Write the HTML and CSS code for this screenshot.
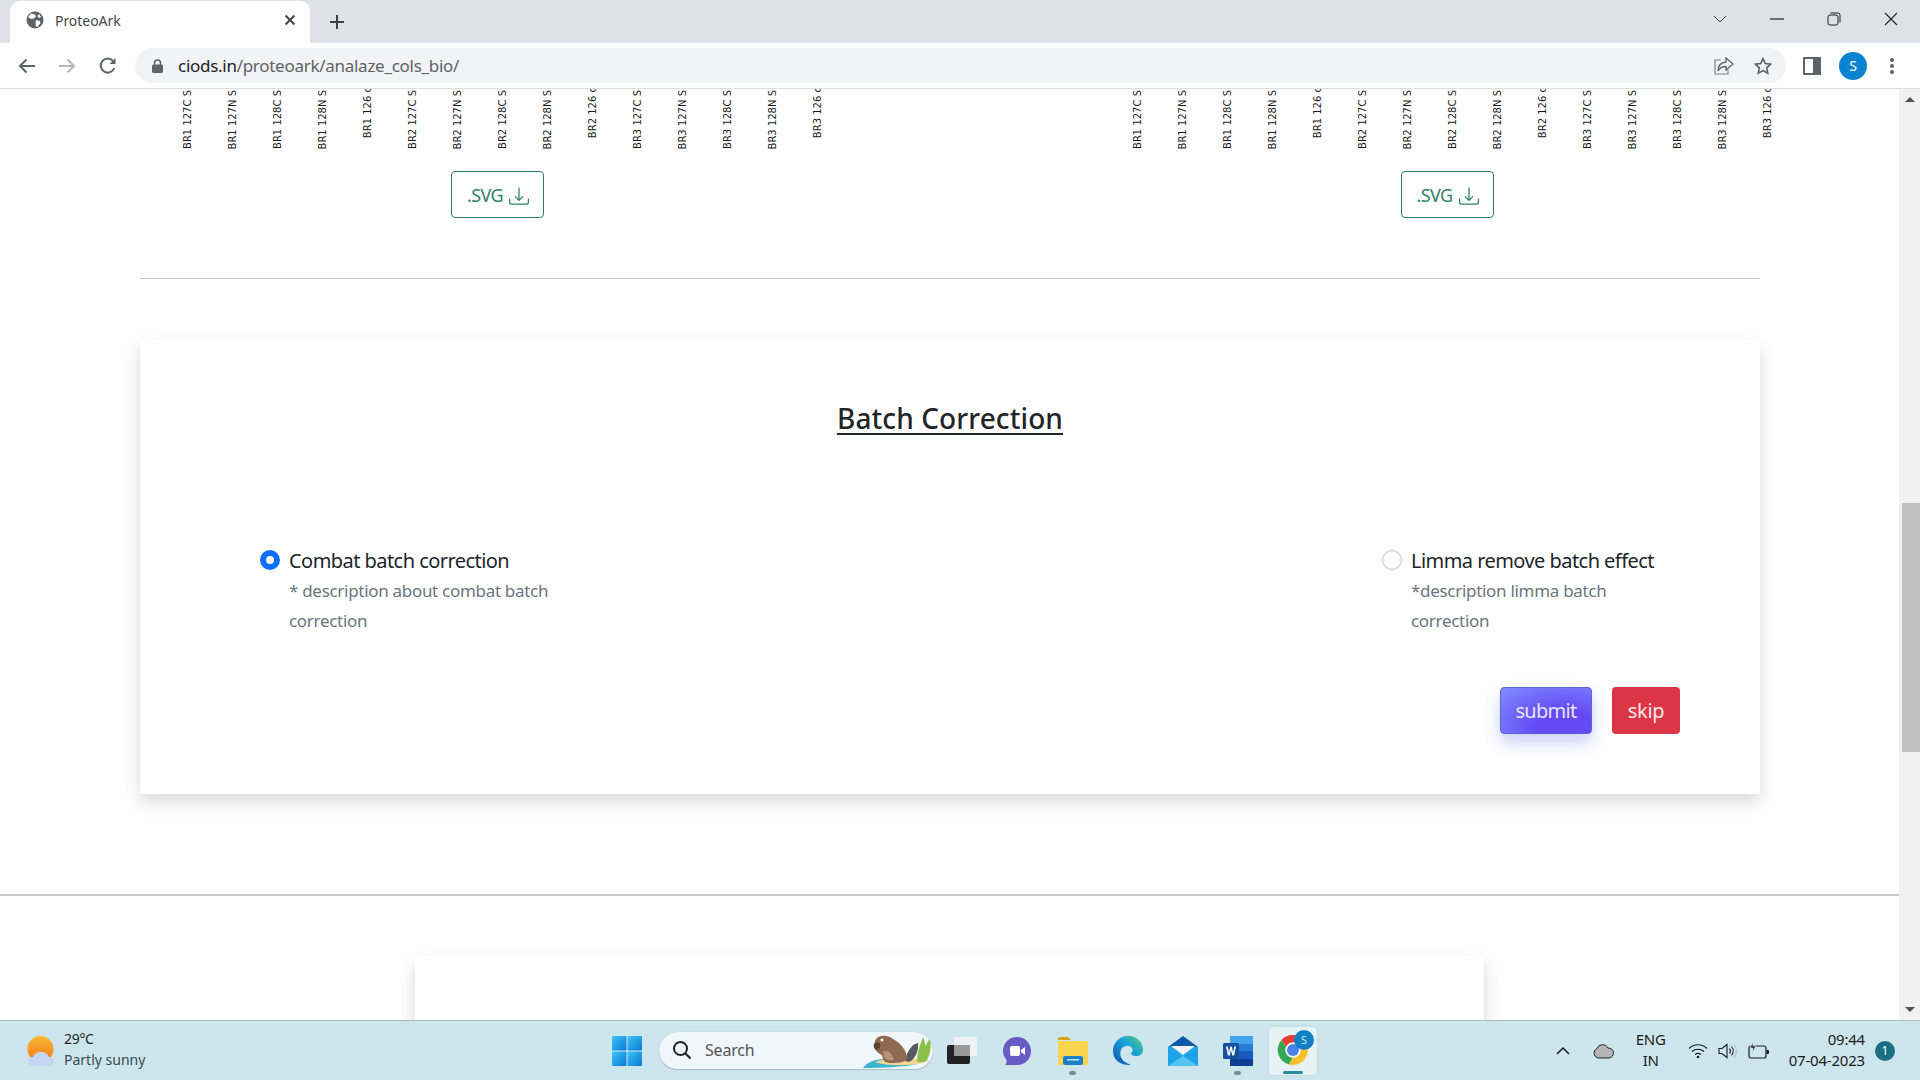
FILE: index.html
```html
<!DOCTYPE html>
<html lang="en">
<head>
<meta charset="utf-8">
<title>ProteoArk</title>
<link rel="stylesheet" href="styles.css">
</head>
<body>
<div class="screen">
  <header class="tabstrip">
    <div class="tab">
      <svg class="favicon" width="18" height="18" viewBox="0 0 18 18"><circle cx="9" cy="9" r="8.5" fill="#5f6368"/><path d="M5 2.5l4 1 1 2-2 2-3 .5-3-2zM10 9l4 1 .5 2-3 4-1.500-.5-.5-3zM13 3l2 3-2 1-1.500-2z" fill="#fff"/></svg>
      <span class="tab-title">ProteoArk</span>
      <svg class="tab-close" width="12" height="12" viewBox="0 0 12 12"><path d="M1.500 1.500l9 9M10.500 1.500l-9 9" stroke="#3c4043" stroke-width="1.800"/></svg>
    </div>
    <svg class="new-tab" width="16" height="16" viewBox="0 0 16 16"><path d="M8 1v14M1 8h14" stroke="#3c4043" stroke-width="2"/></svg>
    <div class="win-controls">
      <svg width="14" height="8" viewBox="0 0 14 8"><path d="M1 1l6 6 6-6" fill="none" stroke="#3c4043"/></svg>
      <svg width="14" height="2" viewBox="0 0 14 2"><path d="M0 1h14" stroke="#222" stroke-width="1.200"/></svg>
      <svg width="14" height="14" viewBox="0 0 14 14"><rect x="1" y="3" width="10" height="10" rx="2" fill="none" stroke="#222"/><path d="M3.500 1H11a2 2 0 0 1 2 2v7.500" fill="none" stroke="#222"/></svg>
      <svg width="14" height="14" viewBox="0 0 14 14"><path d="M1 1l12 12M13 1L1 13" stroke="#222" stroke-width="1.100"/></svg>
    </div>
  </header>

  <nav class="toolbar">
    <svg class="nav-back" width="18" height="16" viewBox="0 0 18 16"><path d="M17 8H2M8.500 1.500L2 8l6.500 6.500" fill="none" stroke="#5f6368" stroke-width="2"/></svg>
    <svg class="nav-fwd" width="18" height="16" viewBox="0 0 18 16"><path d="M1 8h15M9.500 1.500L16 8l-6.500 6.500" fill="none" stroke="#b4b7bb" stroke-width="2"/></svg>
    <svg class="nav-reload" width="18" height="18" viewBox="0 0 18 18"><path d="M15.300 11a7 7 0 1 1-1.300-7" fill="none" stroke="#5f6368" stroke-width="2"/><path d="M16.500 1v6h-6z" fill="#5f6368"/></svg>
    <div class="omnibox">
      <svg class="lock" width="11" height="14" viewBox="0 0 11 14"><path d="M2.500 6V4a3 3 0 0 1 6 0v2" fill="none" stroke="#5f6368" stroke-width="1.500"/><rect y="5.500" width="11" height="8.500" rx="1.500" fill="#5f6368"/></svg>
      <span class="url"><span class="url-host">ciods.in</span>/proteoark/analaze_cols_bio/</span>
      <svg class="omni-share" width="20" height="18" viewBox="0 0 20 18"><path d="M7 3H1v14h13v-4" fill="none" stroke="#7d8085" stroke-width="1.200"/><path d="M12 1l7 6-7 6V9.500C8 9.500 5.500 11 4 14c0-5 3-8.500 8-9z" fill="none" stroke="#5f6368" stroke-width="1.300"/></svg>
      <svg class="omni-star" width="18" height="18" viewBox="0 0 20 20"><path d="M10 1.800l2.500 5.500 6 .7-4.400 4.100 1.200 5.900L10 15.100l-5.300 2.900 1.200-5.900L1.500 8l6-.7z" fill="none" stroke="#5f6368" stroke-width="1.800"/></svg>
    </div>
    <div class="panel-icon"><span class="panel-slot"></span></div>
    <div class="avatar">S</div>
    <svg class="kebab" width="6" height="18" viewBox="0 0 6 18"><circle cx="3" cy="3" r="2" fill="#5f6368"/><circle cx="3" cy="9" r="2" fill="#5f6368"/><circle cx="3" cy="15" r="2" fill="#5f6368"/></svg>
  </nav>

  <div class="viewport">
    <main class="page">
      <section class="charts">
        <div class="chart">
          <div class="ticks">
            <span class="tick">BR1 127C S</span><span class="tick">BR1 127N S</span><span class="tick">BR1 128C S</span><span class="tick">BR1 128N S</span><span class="tick tick-short">BR1 126 c</span>
            <span class="tick">BR2 127C S</span><span class="tick">BR2 127N S</span><span class="tick">BR2 128C S</span><span class="tick">BR2 128N S</span><span class="tick tick-short">BR2 126 c</span>
            <span class="tick">BR3 127C S</span><span class="tick">BR3 127N S</span><span class="tick">BR3 128C S</span><span class="tick">BR3 128N S</span><span class="tick tick-short">BR3 126 c</span>
          </div>
          <button class="btn-svg" type="button">.SVG
            <svg width="20" height="20" viewBox="0 0 16 16" fill="currentColor"><path d="M.5 9.900a.5.5 0 0 1 .5.5v2.500a1 1 0 0 0 1 1h12a1 1 0 0 0 1-1v-2.500a.5.5 0 0 1 1 0v2.500a2 2 0 0 1-2 2H2a2 2 0 0 1-2-2v-2.500a.5.5 0 0 1 .5-.5z"/><path d="M7.646 11.854a.5.5 0 0 0 .708 0l3-3a.5.5 0 0 0-.708-.708L8.500 10.293V1.500a.5.5 0 0 0-1 0v8.793L5.354 8.146a.5.5 0 1 0-.708.708l3 3z"/></svg>
          </button>
        </div>
        <div class="chart">
          <div class="ticks">
            <span class="tick">BR1 127C S</span><span class="tick">BR1 127N S</span><span class="tick">BR1 128C S</span><span class="tick">BR1 128N S</span><span class="tick tick-short">BR1 126 c</span>
            <span class="tick">BR2 127C S</span><span class="tick">BR2 127N S</span><span class="tick">BR2 128C S</span><span class="tick">BR2 128N S</span><span class="tick tick-short">BR2 126 c</span>
            <span class="tick">BR3 127C S</span><span class="tick">BR3 127N S</span><span class="tick">BR3 128C S</span><span class="tick">BR3 128N S</span><span class="tick tick-short">BR3 126 c</span>
          </div>
          <button class="btn-svg" type="button">.SVG
            <svg width="20" height="20" viewBox="0 0 16 16" fill="currentColor"><path d="M.5 9.900a.5.5 0 0 1 .5.5v2.500a1 1 0 0 0 1 1h12a1 1 0 0 0 1-1v-2.500a.5.5 0 0 1 1 0v2.500a2 2 0 0 1-2 2H2a2 2 0 0 1-2-2v-2.500a.5.5 0 0 1 .5-.5z"/><path d="M7.646 11.854a.5.5 0 0 0 .708 0l3-3a.5.5 0 0 0-.708-.708L8.500 10.293V1.500a.5.5 0 0 0-1 0v8.793L5.354 8.146a.5.5 0 1 0-.708.708l3 3z"/></svg>
          </button>
        </div>
      </section>

      <hr class="rule-inner">

      <section class="card">
        <h2 class="card-title">Batch Correction</h2>
        <div class="options">
          <div class="option">
            <label class="option-label"><input class="radio" type="radio" name="batch" checked>Combat batch correction</label>
            <p class="option-desc">* description about combat batch correction</p>
          </div>
          <div class="option">
            <label class="option-label"><input class="radio" type="radio" name="batch">Limma remove batch effect</label>
            <p class="option-desc">*description limma batch correction</p>
          </div>
        </div>
        <div class="actions">
          <button class="btn btn-submit" type="button">submit</button>
          <button class="btn btn-skip" type="button">skip</button>
        </div>
      </section>

      <hr class="rule-full">
      <section class="card-next"></section>
    </main>
    <aside class="scrollbar">
      <span class="arrow-up"></span>
      <span class="thumb"></span>
      <span class="arrow-down"></span>
    </aside>
  </div>

  <footer class="taskbar">
    <div class="tb-left">
      <svg width="28" height="30" viewBox="0 0 28 30"><defs><linearGradient id="sun" x1="0" y1="0" x2="0" y2="1"><stop offset="0" stop-color="#fbb830"/><stop offset="1" stop-color="#ee7a1e"/></linearGradient></defs><ellipse cx="13.500" cy="13" rx="13" ry="13" fill="url(#sun)"/><path d="M7 30c-4 0-6-2-6-4.500S3 21 6 21c1-3 4-5 8-5s7 2 8 5c3 0 5 2 5 4.500S25 30 21 30z" fill="#c3d6f3"/></svg>
      <div class="weather">
        <span class="weather-temp">29°C</span>
        <span class="weather-text">Partly sunny</span>
      </div>
    </div>
    <svg class="win-logo" width="30" height="30" viewBox="0 0 30 30"><defs><linearGradient id="winb" x1="0" y1="0" x2="1" y2="1"><stop offset="0" stop-color="#40c4f7"/><stop offset="1" stop-color="#0a78d4"/></linearGradient></defs><rect width="14.500" height="14.500" rx="1" fill="url(#winb)"/><rect x="15.500" width="14.500" height="14.500" rx="1" fill="url(#winb)"/><rect y="15.500" width="14.500" height="14.500" rx="1" fill="url(#winb)"/><rect x="15.500" y="15.500" width="14.500" height="14.500" rx="1" fill="url(#winb)"/></svg>
    <div class="search">
      <svg width="20" height="20" viewBox="0 0 20 20"><circle cx="8.500" cy="8.500" r="6.500" fill="none" stroke="#202020" stroke-width="2"/><path d="M13.500 13.500l5 5" stroke="#202020" stroke-width="2.200"/></svg>
      <span class="search-text">Search</span>
      <svg class="beaver" width="70" height="38" viewBox="0 0 70 38"><path d="M0 37C5 30 15 26 40 28l15 5C40 36 20 37 0 37z" fill="#3bb3d1"/><path d="M12 31c13-5 38-4 54-2-6 6-41 7-54 2z" fill="#f0d890"/><path d="M42 30c2-10 7-17 13-18 1 8-3 16-9 19z" fill="#56595e"/><path d="M54 31c0-11 4-19 6-25 2 4 2 7 2 9 2-3 4-6 5-8 2 9 0 19-5 24z" fill="#8cc04a"/><path d="M12 10c2-6 12-7 18-2 8 4 14 12 14 19 0 4-8 5-16 5s-8-4-9-8c-5-2-9-6-7-14z" fill="#8f6a50"/><path d="M20 20c5-1 9 2 11 9-4 1-8 0-10-3z" fill="#b89274"/><circle cx="19" cy="9" r="1.500" fill="#fff"/><path d="M11 13c2-2 5-2 6 0 1 3-1 6-3 6s-4-3-3-6z" fill="#5e4231"/></svg>
    </div>
    <div class="apps">
      <svg width="30" height="30" viewBox="0 0 30 30"><rect x="0" y="9" width="23" height="19" rx="2" fill="#222"/><rect x="7" y="1" width="23" height="19" rx="2" fill="#f3f3f3" opacity=".9"/><rect x="7" y="9" width="16" height="11" fill="#9a9a9a"/></svg>
      <svg width="30" height="30" viewBox="0 0 30 30"><path d="M15 1c8 0 14 6 14 14s-6 14-14 14H3c2-2 2-4 1-6-2-2-3-5-3-8C1 7 7 1 15 1z" fill="#6a5bc4"/><rect x="8" y="10" width="10" height="10" rx="2" fill="#fff"/><path d="M19 14l4-3v8l-4-3z" fill="#fff"/></svg>
      <div class="app-slot app-slot-files">
        <svg width="30" height="30" viewBox="0 0 30 30"><path d="M0 3a2 2 0 0 1 2-2h8l3 3h-13z" fill="#d9a20f"/><path d="M0 5h28a2 2 0 0 1 2 2v21a1 1 0 0 1-1 1H1a1 1 0 0 1-1-1z" fill="#fbd44f"/><rect x="5" y="20" width="20" height="9" rx="2" fill="#1b7fc9"/><rect x="9" y="23" width="12" height="1.500" fill="#bfe3f7"/></svg>
        <span class="app-dot"></span>
      </div>
      <svg width="30" height="30" viewBox="0 0 30 30"><defs><linearGradient id="edge" x1="0" y1="1" x2="1" y2="0"><stop offset="0" stop-color="#0b4fa8"/><stop offset=".6" stop-color="#1ba3dc"/><stop offset="1" stop-color="#55d16f"/></linearGradient></defs><path d="M15 0c9 0 15 6 15 14 0 4-3 6-7 6-3 0-5-1-5-3 2-1 2-3 1-5-2-3-7-3-10 0-3 4-2 11 3 14 2 1 4 2 6 3C8 30 0 24 0 15 0 7 6 0 15 0z" fill="url(#edge)"/></svg>
      <svg width="30" height="30" viewBox="0 0 30 30"><path d="M15 0l15 11v3H0v-3z" fill="#0b5aa6"/><rect y="11" width="30" height="19" fill="#29a8e8"/><path d="M3 10h24l-12 9z" fill="#eef3f6"/><path d="M0 11l15 9 15-9v19H0z" fill="#1ca3e6"/><path d="M0 30l15-10 15 10z" fill="#56c4f2"/></svg>
      <div class="app-slot">
        <svg width="30" height="30" viewBox="0 0 30 30"><rect x="7" y="0" width="23" height="30" rx="2" fill="#2b7cd3"/><rect x="7" y="0" width="23" height="8" fill="#41a5ee"/><rect x="7" y="15" width="23" height="8" fill="#185abd"/><rect x="7" y="23" width="23" height="7" fill="#103f91"/><rect x="0" y="7" width="16" height="16" rx="1.500" fill="#14509f"/><path d="M3 10.500h1.800l1.200 6 1.300-6h1.500l1.300 6 1.200-6H13l-2 9h-1.700L8 14l-1.300 5.500H5z" fill="#fff"/></svg>
        <span class="app-dot"></span>
      </div>
      <div class="app-active">
        <svg width="34" height="34" viewBox="0 0 34 34"><path d="M17 2a15 15 0 0 1 13 7.500H17a7.500 7.500 0 0 0-7 4.500L5.500 7A15 15 0 0 1 17 2z" fill="#e53d30"/><path d="M5.500 7L10 14a7.500 7.500 0 0 0 7 10.500l-4 7A15 15 0 0 1 5.500 7z" fill="#34a853"/><path d="M30 9.500a15 15 0 0 1-17 22l4-7A7.500 7.500 0 0 0 23.500 13z" fill="#fbc02d"/><circle cx="17" cy="17" r="7.500" fill="#fff"/><circle cx="17" cy="17" r="6" fill="#4a80e8"/></svg>
        <span class="app-badge">S</span>
        <span class="app-bar"></span>
      </div>
    </div>
    <div class="tray">
      <svg class="tray-caret" width="14" height="8" viewBox="0 0 14 8"><path d="M1 7l6-6 6 6" fill="none" stroke="#1b1b1b" stroke-width="1.500"/></svg>
      <svg class="tray-cloud" width="22" height="16" viewBox="0 0 22 16"><path d="M6 15a5 5 0 0 1-1-9.500 6 6 0 0 1 11-.5 5 5 0 0 1 1 10z" fill="#b5b5b5" stroke="#222" stroke-width="1"/></svg>
      <div class="tray-lang"><span>ENG</span><span>IN</span></div>
      <svg class="tray-wifi" width="20" height="16" viewBox="0 0 20 16"><path d="M1 5.500c5-5 13-5 18 0M4 8.500c3.500-3 8.500-3 12 0M7 11.500c2-1.500 4-1.500 6 0" fill="none" stroke="#1b1b1b" stroke-width="1.200"/><circle cx="10" cy="14" r="1.300" fill="#1b1b1b"/></svg>
      <svg class="tray-sound" width="20" height="16" viewBox="0 0 20 16"><path d="M1 5.500h3l5-4v13l-5-4H1z" fill="none" stroke="#1b1b1b" stroke-width="1.100"/><path d="M11.500 5.500a4 4 0 0 1 0 5" fill="none" stroke="#1b1b1b" stroke-width="1.100"/><path d="M13.500 3.500a7 7 0 0 1 0 9" fill="none" stroke="#1b1b1b" stroke-width="1.100"/><path d="M16 1.500a10 10 0 0 1 0 13" fill="none" stroke="#a9bcc3" stroke-width="1.100"/></svg>
      <svg class="tray-batt" width="22" height="18" viewBox="0 0 22 18"><rect x="1" y="4" width="17" height="12" rx="2" fill="none" stroke="#1b1b1b" stroke-width="1.200"/><rect x="18.500" y="8" width="2.500" height="4" rx="1" fill="#1b1b1b"/><path d="M5 0L2 6h3l-1 5 4-7H5z" fill="#1b1b1b" stroke="#cde6ee" stroke-width=".8"/></svg>
      <div class="tray-clock"><span>09:44</span><span>07-04-2023</span></div>
      <span class="tray-badge">1</span>
    </div>
  </footer>
</div>
</body>
</html>
```
FILE: styles.css
```css
* { box-sizing: border-box; }
html, body { margin: 0; height: 100%; overflow: hidden; }
body { font-family: "Noto Sans", "Open Sans", sans-serif; color: #212529; background: #fff; }
.screen { width: 1920px; height: 1080px; display: flex; flex-direction: column; }

/* tab strip */
.tabstrip { height: 43px; flex: none; background: #dee1e6; display: flex; align-items: center; position: relative; }
.tab { width: 300px; height: 42px; margin: 1px 0 0 10px; background: #fff; border-radius: 10px 10px 0 0; display: flex; align-items: center; padding: 0 14px 4px 16px; }
.favicon { flex: none; }
.tab-title { margin-left: 11px; font-size: 14px; color: #45474a; flex: 1; letter-spacing: -.05px; }
.new-tab { margin-left: 19px; }
.win-controls { margin-left: auto; width: 207px; display: flex; align-items: center; justify-content: space-between; padding: 0 22px 6px 0; }

/* toolbar */
.toolbar { height: 46px; flex: none; background: #fff; border-bottom: 1px solid #dadce0; display: flex; align-items: center; }
.nav-back { margin-left: 18px; }
.nav-fwd { margin-left: 22px; }
.nav-reload { margin-left: 23px; }
.omnibox { margin-left: 18px; width: 1651px; height: 35px; background: #f1f3f4; border-radius: 18px; display: flex; align-items: center; padding: 0 14px 0 17px; }
.url { margin-left: 15px; font-size: 17px; color: #5f6368; letter-spacing: -.28px; flex: 1; }
.url-host { color: #202124; }
.omni-share { margin-right: 20px; }
.panel-icon { margin-left: 17px; width: 18px; height: 18px; background: #5f6368; padding: 2px 8px 2px 2px; }
.panel-slot { display: block; width: 8px; height: 14px; background: #fff; }
.avatar { margin-left: 18px; width: 28px; height: 28px; border-radius: 50%; background: #0a84d0; color: #fff; font-size: 14px; display: flex; align-items: center; justify-content: center; }
.kebab { margin-left: 22px; }

/* viewport */
.viewport { flex: 1; min-height: 0; display: flex; overflow: hidden; }
.page { width: 1899px; flex: none; overflow: hidden; background: #fff; }
.charts { display: flex; }
.chart { width: 949.500px; flex: none; }
.ticks { height: 60px; overflow: hidden; display: flex; align-items: flex-end; padding-left: 165px; }
.tick { width: 45px; flex: none; display: flex; justify-content: center; }
.tick { writing-mode: vertical-rl; transform: rotate(180deg); font-family: "DejaVu Sans", sans-serif; font-size: 10px; line-height: 45px; color: #1a1a1a; white-space: nowrap; text-align: left; }
.tick-short { margin-bottom: 11px; }
.btn-svg { margin: 22px 0 0 451px; width: 93px; height: 47px; display: flex; align-items: center; justify-content: center; gap: 6px; border: 1px solid #2f7d68; border-radius: 4px; background: #fff; color: #2f8068; font: 18px "Noto Sans", sans-serif; letter-spacing: -.6px; padding: 0 0 0 1px; }
.btn-svg svg { margin-top: 3px; }

.rule-inner { margin: 60px 0 0 140px; width: 1620px; height: 1px; border: 0; background: #c9c9c9; }
.card { margin: 61px 0 0 140px; width: 1620px; background: #fff; box-shadow: 0 8px 16px rgba(0,0,0,.15); padding: 61px 80px 60px; }
.card-title { margin: 0; font-size: 28px; line-height: 34px; font-weight: 500; text-align: center; text-decoration: underline; text-underline-offset: 4px; letter-spacing: .1px; }
.options { margin-top: 111px; padding-left: 40px; display: flex; justify-content: space-between; }
.option { width: 298px; }
.option-label { display: flex; align-items: center; gap: 9px; font-size: 20px; line-height: 30px; letter-spacing: -.55px; color: #212529; }
.radio { appearance: none; margin: 0; width: 20px; height: 20px; flex: none; border-radius: 50%; border: 1px solid #bfbfbf; background: #fff; position: relative; top: -1px; }
.radio:checked { border: 6px solid #0d6efd; }
.option-desc { margin: 0 0 0 29px; font-size: 17px; line-height: 30px; color: #6c757d; letter-spacing: -.3px; }
.actions { margin-top: 51px; display: flex; justify-content: flex-end; gap: 20px; }
.btn { height: 47px; border-radius: 4px; border: 1px solid transparent; color: #fff; font: 20px "Noto Sans", sans-serif; letter-spacing: -.3px; padding: 0; }
.btn-submit { width: 92px; background: radial-gradient(ellipse at 70% 85%, #6549f5 30%, #7f8fff 100%); border-color: #5c62d8; box-shadow: 0 8px 16px rgba(80,90,225,.3); color: #e6e4ff; letter-spacing: -.7px; }
.btn-skip { width: 68px; background: #dc3545; color: #fbe8ea; }

.rule-full { margin: 100px 0 0; height: 2px; border: 0; background: #c8c8c8; }
.card-next { margin: 60px 0 0 415px; width: 1069px; height: 300px; background: #fff; box-shadow: 0 8px 16px rgba(0,0,0,.15); }

/* scrollbar */
.scrollbar { width: 21px; flex: none; background: #f1f1f1; display: flex; flex-direction: column; align-items: center; }
.arrow-up, .arrow-down { width: 0; height: 0; border-left: 5px solid transparent; border-right: 5px solid transparent; }
.arrow-up { margin-top: 8px; border-bottom: 5px solid #505050; }
.arrow-down { margin-top: 255px; border-top: 5px solid #505050; }
.thumb { margin-top: 401px; width: 18px; align-self: flex-end; height: 249px; background: #c1c1c1; }

/* taskbar */
.taskbar { height: 60px; flex: none; background: #cde6ee; border-top: 1px solid #a9bfc7; display: flex; align-items: center; }
.tb-left { width: 612px; flex: none; padding: 0 0 0 27px; display: flex; align-items: center; gap: 9px; }
.weather { display: flex; flex-direction: column; font-size: 14px; line-height: 21px; color: #222; letter-spacing: -.3px; padding-bottom: 3px; }
.weather-text { color: #3a4b52; letter-spacing: 0; }
.win-logo { flex: none; }
.search { margin-left: 17px; width: 274px; height: 38px; flex: none; border-radius: 19px; background: #eff7fa; border-bottom: 1px solid #a9c0c9; box-shadow: 0 0 1px rgba(0,0,0,.25); display: flex; align-items: center; padding-left: 13px; overflow: hidden; }
.search-text { margin-left: 13px; font-size: 16px; color: #555; flex: 1; letter-spacing: -.2px; }
.beaver { flex: none; }
.apps { margin-left: 14px; display: flex; align-items: center; gap: 25px; }
.apps > svg { flex: none; }
.app-slot { position: relative; width: 30px; height: 30px; }
.app-slot-files { margin-left: 1px; }
.app-slot svg { display: block; }
.app-dot { position: absolute; left: 11px; top: 35px; width: 7px; height: 4px; border-radius: 2px; background: #7a8a90; }
.app-active { position: relative; margin-left: -9px; width: 48px; height: 48px; background: #e6f2f6; border-radius: 4px; box-shadow: 0 0 2px rgba(0,0,0,.15); display: flex; align-items: center; justify-content: center; }
.app-active svg { margin-top: -1px; }
.app-badge { position: absolute; right: 3px; top: 3px; width: 20px; height: 20px; border-radius: 50%; background: #1281c4; color: #cfe8f6; font-size: 11px; display: flex; align-items: center; justify-content: center; }
.app-bar { position: absolute; left: 14px; bottom: 1px; width: 20px; height: 3px; border-radius: 2px; background: #2a8ba1; }
.tray { margin-left: auto; display: flex; align-items: center; color: #1b1b1b; padding-right: 25px; }
.tray-cloud { margin-left: 22px; }
.tray-lang { margin-left: 13px; width: 48px; display: flex; flex-direction: column; align-items: center; font-size: 15px; line-height: 21px; letter-spacing: -.2px; padding-bottom: 1px; }
.tray-wifi { margin-left: 13px; }
.tray-sound { margin-left: 10px; }
.tray-batt { margin-left: 10px; }
.tray-clock { margin-left: 19px; display: flex; flex-direction: column; align-items: flex-end; font-size: 15px; line-height: 21px; letter-spacing: -.2px; padding-bottom: 2px; }
.tray-badge { margin-left: 10px; width: 20px; height: 20px; border-radius: 50%; background: #1b6f85; color: #fff; font-size: 12px; display: flex; align-items: center; justify-content: center; }
```
